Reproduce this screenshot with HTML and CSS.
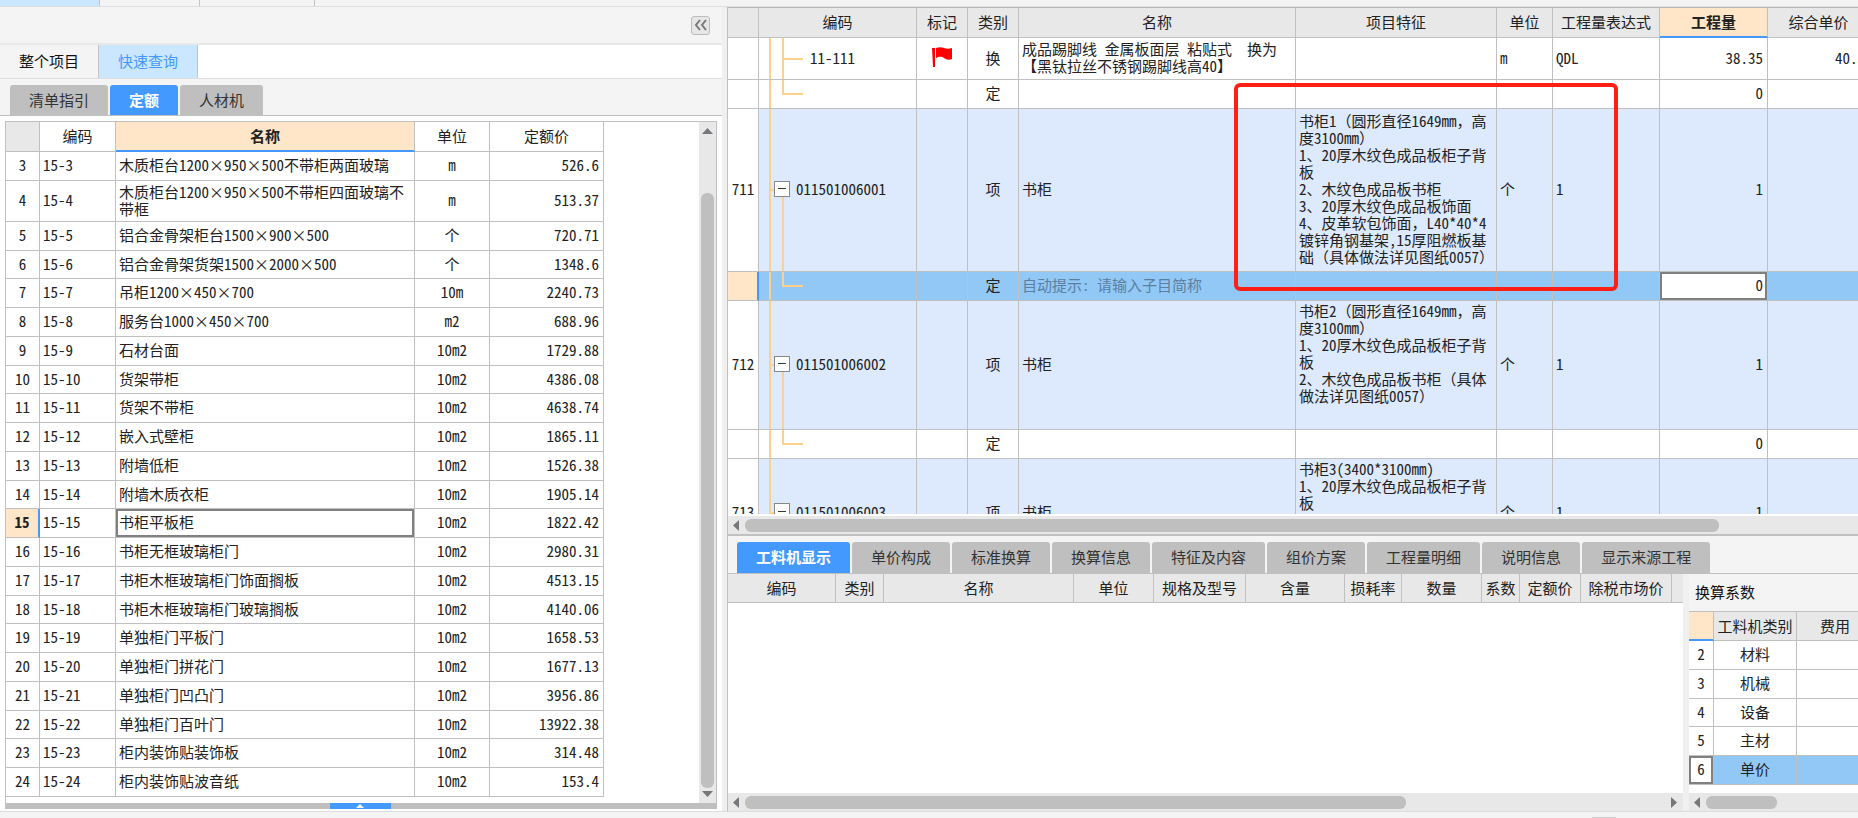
FILE: index.html
```html
<!DOCTYPE html>
<html lang="zh-CN">
<head>
<meta charset="utf-8">
<title>快速查询</title>
<link rel="stylesheet" href="styles.css">
</head>
<body>
<div class="app">
  <div class="strip"><span class="strip-tab on"></span><span class="strip-tab"></span><span class="strip-tab wide"></span></div>
  <main class="main">
    <aside class="left">
      <div class="left-head">
        <button class="collapse" aria-label="收起"><svg width="14" height="12" viewBox="0 0 14 12" fill="none" stroke="#777" stroke-width="2"><path d="M6 1 2 6l4 5M12 1 8 6l4 5"/></svg></button>
      </div>
      <div class="modes">
        <button class="mode">整个项目</button><button class="mode on">快速查询</button>
      </div>
      <div class="tabs left-tabs">
        <button class="tab">清单指引</button><button class="tab on">定额</button><button class="tab">人材机</button>
      </div>
      <div class="frame">
        <div class="frame-body">
          <div class="frame-table">
            <table class="grid quota">
              <colgroup><col class="q-no"><col class="q-code"><col class="q-name"><col class="q-unit"><col class="q-price"></colgroup>
              <thead><tr><th class="corner"></th><th>编码</th><th class="active">名称</th><th>单位</th><th>定额价</th></tr></thead>
              <tbody>
              <tr><td class="c">3</td><td>15-3</td><td>木质柜台1200<i>×</i>950<i>×</i>500不带柜两面玻璃</td><td class="c">m</td><td class="r">526.6</td></tr>
              <tr class="double"><td class="c">4</td><td>15-4</td><td>木质柜台1200<i>×</i>950<i>×</i>500不带柜四面玻璃不带框</td><td class="c">m</td><td class="r">513.37</td></tr>
              <tr><td class="c">5</td><td>15-5</td><td>铝合金骨架柜台1500<i>×</i>900<i>×</i>500</td><td class="c">个</td><td class="r">720.71</td></tr>
              <tr><td class="c">6</td><td>15-6</td><td>铝合金骨架货架1500<i>×</i>2000<i>×</i>500</td><td class="c">个</td><td class="r">1348.6</td></tr>
              <tr><td class="c">7</td><td>15-7</td><td>吊柜1200<i>×</i>450<i>×</i>700</td><td class="c">10m</td><td class="r">2240.73</td></tr>
              <tr><td class="c">8</td><td>15-8</td><td>服务台1000<i>×</i>450<i>×</i>700</td><td class="c">m2</td><td class="r">688.96</td></tr>
              <tr><td class="c">9</td><td>15-9</td><td>石材台面</td><td class="c">10m2</td><td class="r">1729.88</td></tr>
              <tr><td class="c">10</td><td>15-10</td><td>货架带柜</td><td class="c">10m2</td><td class="r">4386.08</td></tr>
              <tr><td class="c">11</td><td>15-11</td><td>货架不带柜</td><td class="c">10m2</td><td class="r">4638.74</td></tr>
              <tr><td class="c">12</td><td>15-12</td><td>嵌入式壁柜</td><td class="c">10m2</td><td class="r">1865.11</td></tr>
              <tr><td class="c">13</td><td>15-13</td><td>附墙低柜</td><td class="c">10m2</td><td class="r">1526.38</td></tr>
              <tr><td class="c">14</td><td>15-14</td><td>附墙木质衣柜</td><td class="c">10m2</td><td class="r">1905.14</td></tr>
              <tr><td class="c current">15</td><td>15-15</td><td class="focus">书柜平板柜</td><td class="c">10m2</td><td class="r">1822.42</td></tr>
              <tr><td class="c">16</td><td>15-16</td><td>书柜无框玻璃柜门</td><td class="c">10m2</td><td class="r">2980.31</td></tr>
              <tr><td class="c">17</td><td>15-17</td><td>书柜木框玻璃柜门饰面搁板</td><td class="c">10m2</td><td class="r">4513.15</td></tr>
              <tr><td class="c">18</td><td>15-18</td><td>书柜木框玻璃柜门玻璃搁板</td><td class="c">10m2</td><td class="r">4140.06</td></tr>
              <tr><td class="c">19</td><td>15-19</td><td>单独柜门平板门</td><td class="c">10m2</td><td class="r">1658.53</td></tr>
              <tr><td class="c">20</td><td>15-20</td><td>单独柜门拼花门</td><td class="c">10m2</td><td class="r">1677.13</td></tr>
              <tr><td class="c">21</td><td>15-21</td><td>单独柜门凹凸门</td><td class="c">10m2</td><td class="r">3956.86</td></tr>
              <tr><td class="c">22</td><td>15-22</td><td>单独柜门百叶门</td><td class="c">10m2</td><td class="r">13922.38</td></tr>
              <tr><td class="c">23</td><td>15-23</td><td>柜内装饰贴装饰板</td><td class="c">10m2</td><td class="r">314.48</td></tr>
              <tr><td class="c">24</td><td>15-24</td><td>柜内装饰贴波音纸</td><td class="c">10m2</td><td class="r">153.4</td></tr>
              </tbody>
            </table>
          </div>
          <div class="vscroll">
            <svg width="11" height="6" viewBox="0 0 11 6"><path d="M0 6 5.5 0 11 6z" fill="#77777b"/></svg>
            <div class="vtrack"><div class="vthumb"></div></div>
            <svg width="11" height="6" viewBox="0 0 11 6"><path d="M0 0 5.5 6 11 0z" fill="#77777b"/></svg>
          </div>
        </div>
        <div class="drawer"><button class="drawer-tab" aria-label="展开"><svg width="8" height="4" viewBox="0 0 8 4"><path d="M0 4 4 0l4 4z" fill="#fff"/></svg></button></div>
      </div>
    </aside>
    <div class="resizer"></div>
    <section class="right">
      <div class="bill">
        <div class="bill-view">
          <table class="grid bill-table">
            <colgroup><col class="b-no"><col class="b-code"><col class="b-mark"><col class="b-kind"><col class="b-name"><col class="b-feat"><col class="b-unit"><col class="b-expr"><col class="b-qty"><col class="b-price"></colgroup>
            <thead><tr><th></th><th>编码</th><th>标记</th><th>类别</th><th>名称</th><th>项目特征</th><th>单位</th><th>工程量表达式</th><th class="active">工程量</th><th>综合单价</th></tr></thead>
            <tbody>
            <tr class="two"><td></td><td class="tree mid"><span class="sub">11-111</span></td><td class="c"><svg class="flag" width="20" height="20" viewBox="0 0 20 20"><path d="M0 1h3v19H1z" fill="#f00"/><path d="M4 1c3-1 5-1 8 0s5 1 8 0v11c-3 1-5 1-8-1s-5-1-8 0z" fill="#f00"/></svg></td><td class="c">换</td><td>成品踢脚线 金属板面层 粘贴式&nbsp; 换为<br>【黑钛拉丝不锈钢踢脚线高40】</td><td></td><td>m</td><td>QDL</td><td class="r">38.35</td><td class="r">40.5</td></tr>
            <tr class="one"><td></td><td class="tree end"></td><td></td><td class="c">定</td><td></td><td></td><td></td><td></td><td class="r">0</td><td></td></tr>
            <tr class="item h711"><td class="c no">711</td><td class="tree root"><div class="node"><button class="fold" aria-label="折叠"></button>011501006001</div></td><td></td><td class="c">项</td><td>书柜</td><td class="feature">书柜1<i>（</i>圆形直径1649mm<i>，</i>高<br>度3100mm<i>）</i><br>1、20厚木纹色成品板柜子背<br>板<br>2、木纹色成品板书柜<br>3、20厚木纹色成品板饰面<br>4、皮革软包饰面<i>，</i>L40*40*4<br>镀锌角钢基架,15厚阻燃板基<br>础<i>（</i>具体做法详见图纸0057<i>）</i></td><td>个</td><td>1</td><td class="r">1</td><td></td></tr>
            <tr class="one selected"><td class="current"></td><td class="tree end"></td><td></td><td class="c">定</td><td class="hint">自动提示: 请输入子目简称</td><td></td><td></td><td></td><td class="r focus">0</td><td></td></tr>
            <tr class="item h712"><td class="c no">712</td><td class="tree root"><div class="node"><button class="fold" aria-label="折叠"></button>011501006002</div></td><td></td><td class="c">项</td><td>书柜</td><td class="feature top">书柜2<i>（</i>圆形直径1649mm<i>，</i>高<br>度3100mm<i>）</i><br>1、20厚木纹色成品板柜子背<br>板<br>2、木纹色成品板书柜<i>（</i>具体<br>做法详见图纸0057<i>）</i></td><td>个</td><td>1</td><td class="r">1</td><td></td></tr>
            <tr class="one"><td></td><td class="tree end"></td><td></td><td class="c">定</td><td></td><td></td><td></td><td></td><td class="r">0</td><td></td></tr>
            <tr class="item h713"><td class="c no">713</td><td class="tree last"><div class="node"><button class="fold" aria-label="折叠"></button>011501006003</div></td><td></td><td class="c">项</td><td>书柜</td><td class="feature top">书柜3(3400*3100mm)<br>1、20厚木纹色成品板柜子背<br>板</td><td>个</td><td>1</td><td class="r">1</td><td></td></tr>
            </tbody>
          </table>
          <div class="callout"></div>
        </div>
        <div class="hscroll">
          <svg width="6" height="11" viewBox="0 0 6 11"><path d="M6 0 0 5.500 6 11z" fill="#77777b"/></svg>
          <div class="hthumb wide"></div>
        </div>
      </div>
      <div class="detail">
        <div class="tabs detail-tabs">
          <button class="tab on">工料机显示</button><button class="tab">单价构成</button><button class="tab">标准换算</button><button class="tab">换算信息</button><button class="tab">特征及内容</button><button class="tab">组价方案</button><button class="tab">工程量明细</button><button class="tab">说明信息</button><button class="tab">显示来源工程</button>
        </div>
        <div class="detail-body">
          <div class="res">
            <div class="res-view">
              <table class="grid res-table">
                <colgroup><col class="r-code"><col class="r-kind"><col class="r-name"><col class="r-unit"><col class="r-spec"><col class="r-amt"><col class="r-loss"><col class="r-qty"><col class="r-coef"><col class="r-price"><col class="r-mkt"><col></colgroup>
                <thead><tr><th>编码</th><th>类别</th><th>名称</th><th>单位</th><th>规格及型号</th><th>含量</th><th>损耗率</th><th>数量</th><th>系数</th><th>定额价</th><th>除税市场价</th><th></th></tr></thead>
              </table>
            </div>
            <div class="hscroll">
              <svg width="6" height="11" viewBox="0 0 6 11"><path d="M6 0 0 5.500 6 11z" fill="#77777b"/></svg>
              <div class="hthumb medium"></div>
              <svg class="far" width="6" height="11" viewBox="0 0 6 11"><path d="M0 0l6 5.500L0 11z" fill="#77777b"/></svg>
            </div>
          </div>
          <div class="coef">
            <h2 class="coef-title">换算系数</h2>
            <div class="coef-view">
              <table class="grid coef-table">
                <colgroup><col class="f-no"><col class="f-kind"><col class="f-fee"></colgroup>
                <thead><tr><th class="active"></th><th>工料机类别</th><th>费用</th></tr></thead>
                <tbody>
                <tr><td class="c">2</td><td class="c">材料</td><td></td></tr>
                <tr><td class="c">3</td><td class="c">机械</td><td></td></tr>
                <tr><td class="c">4</td><td class="c">设备</td><td></td></tr>
                <tr><td class="c">5</td><td class="c">主材</td><td></td></tr>
                <tr class="selected"><td class="c focus">6</td><td class="c">单价</td><td></td></tr>
                </tbody>
              </table>
            </div>
            <div class="hscroll">
              <svg width="6" height="11" viewBox="0 0 6 11"><path d="M6 0 0 5.500 6 11z" fill="#77777b"/></svg>
              <div class="hthumb short"></div>
            </div>
          </div>
        </div>
      </div>
    </section>
  </main>
  <footer class="status"><span class="grip"></span></footer>
</div>
</body>
</html>
```
FILE: styles.css
```css
* { box-sizing: border-box; }

body {
  margin: 0;
  font: 15px/17px "Noto Sans CJK SC", "Liberation Sans", sans-serif;
  font-feature-settings: "hwid";
  color: #222;
  background: #f4f4f4;
}

button {
  margin: 0;
  border: 0;
  padding: 0;
  font: inherit;
  font-feature-settings: inherit;
  color: inherit;
  background: none;
}

svg { display: block; flex: none; }

.app { display: flex; flex-direction: column; height: 100vh; overflow: hidden; }

.strip { display: flex; flex: none; height: 7px; border-bottom: 1px solid #dedede; }
.strip-tab { width: 100px; border-right: 1px solid #c4c4c4; }
.strip-tab.wide { width: 115px; }
.strip-tab.on { background: #cbe7ff; }

.main { display: flex; flex: 1; min-height: 0; }

.status { display: flex; flex: none; height: 7px; border-top: 1px solid #dcdcdc; align-items: flex-end; justify-content: flex-end; padding-right: 242px; }
.grip { width: 24px; height: 1px; background: #c8c8c8; }

/* Left panel */
.left { display: flex; flex-direction: column; flex: none; width: 722px; background: #fff; }
.left-head { display: flex; justify-content: flex-end; align-items: center; height: 38px; padding-right: 12px; border-bottom: 2px solid #e8e8e8; background: #f4f4f4; }
.collapse { display: grid; place-items: center; width: 19px; height: 19px; border: 1px solid #bdbdbd; border-radius: 3px; background: #e6e6e6; }

.modes { display: flex; height: 34px; border-bottom: 1px solid #e0e0e0; }
.mode { padding: 0 19px 2px; border-right: 1px solid #c4c4c4; color: #111; background: #f4f4f4; }
.mode.on { color: #4499ff; background: #cbe7ff; }

.tabs { display: flex; align-items: flex-end; gap: 2px; border-bottom: 1px solid #c0c0c0; background: #f4f4f4; }
.tab { height: 30px; padding: 0 19px 2px; border-radius: 3px 3px 0 0; color: #333; background: #bfbfbf; white-space: nowrap; }
.tab.on { color: #fff; font-weight: 700; background: #4499ff; }
.left-tabs { height: 37px; padding-left: 10px; }

.frame { display: flex; flex-direction: column; flex: 1; min-height: 0; margin: 5px 5px 2px; border: 1px solid #c0c0c0; border-bottom: 0; }
.frame-body { display: flex; flex: 1; min-height: 0; }
.frame-table { flex: 1; overflow: hidden; }

.drawer { display: flex; flex: none; height: 6px; justify-content: center; padding-right: 2px; background: #bfbfbf; }
.drawer-tab { display: grid; place-items: center; width: 61px; height: 6px; background: #4499ff; }

.vscroll { display: flex; flex-direction: column; align-items: center; flex: none; width: 17px; padding: 6px 0; background: #e8e8e8; }
.vtrack { flex: 1; width: 13px; padding: 59px 0 3px; }
.vthumb { height: 100%; border-radius: 6px; background: #bfbfbf; }

.resizer { flex: none; width: 5px; background: #f0f0f0; }

/* Tables */
.grid { table-layout: fixed; border-collapse: separate; border-spacing: 0; }
.grid th, .grid td { padding: 0 4px 3px 3px; border-right: 1px solid #c0c0c0; border-bottom: 1px solid #c0c0c0; text-align: left; font-weight: 400; vertical-align: middle; }
.grid th { padding: 0 0 2px; text-align: center; white-space: nowrap; background: #e8e8e8; }
.grid .c { padding: 0 0 3px; text-align: center; }
.grid .r { text-align: right; }
.grid th.active { border-bottom: 2px solid #4499ff; font-weight: 700; background: #ffe6c8; }
.grid .current { border-right: 2px solid #4499ff; font-weight: 700; background: #ffe6c8; }
.grid .focus { background: #fff; box-shadow: inset 0 0 0 2px #808080; }
.grid .selected { background: #92c8f6; }
/* Full-width symbols among half-width digits */
.grid i { display: inline-block; width: 15px; font-style: normal; font-feature-settings: normal; text-align: center; }

.quota { width: 598px; }
.quota thead tr { height: 30px; }
.quota thead th { background: #fff; }
.quota thead .corner { background: #e8e8e8; }
.quota thead .active { background: #ffe6c8; }
.quota tbody tr { height: 29px; }
.quota tbody tr:nth-child(4n) { height: 28px; }
.quota tbody .double { height: 41px; }
.q-no { width: 34px; }
.q-code { width: 76px; }
.q-name { width: 299px; }
.q-unit { width: 75px; }
.q-price { width: 114px; }

/* Bill of quantities */
.right { display: flex; flex-direction: column; flex: 1; min-width: 0; border-left: 1px solid #c0c0c0; }
.bill { display: flex; flex-direction: column; flex: 1; min-height: 0; border-top: 1px solid #b8b8b8; border-bottom: 2px solid #c0c0c0; background: #fff; }
.bill-view { position: relative; flex: 1; min-height: 0; margin-bottom: 2px; overflow: hidden; }
.bill-table { width: 1142px; }
.bill-table thead tr { height: 30px; }
.bill-table .two { height: 42px; }
.bill-table .one { height: 29px; }
.bill-table .h711 { height: 163px; }
.bill-table .h712 { height: 129px; }
.bill-table .h713 { height: 108px; }
.bill-table .item { background: #dde9fd; }
.bill-table .no { background: #fff; }
.bill-table .feature { padding-right: 0; white-space: nowrap; }
.bill-table .top { padding-top: 1px; vertical-align: top; }
.bill-table .hint { color: #5c7f9e; }
.b-no { width: 31px; }
.b-code { width: 158px; }
.b-mark { width: 51px; }
.b-kind { width: 51px; }
.b-name { width: 277px; }
.b-feat { width: 201px; }
.b-unit { width: 56px; }
.b-expr { width: 107px; }
.b-qty { width: 108px; }
.b-price { width: 102px; }

.flag { margin: 0 auto; }
.bill-table .tree { --line: linear-gradient(#ffd08c, #ffd08c); padding-left: 15px; background-repeat: no-repeat; }
.tree.mid { background-image: var(--line), var(--line), var(--line); background-position: 10px 0, 23px 0, 23px 50%; background-size: 2px 100%, 2px 100%, 21px 2px; }
.tree.end { background-image: var(--line), var(--line), var(--line); background-position: 10px 0, 23px 0, 23px 50%; background-size: 2px 100%, 2px 50%, 21px 2px; }
.tree.root { background-image: var(--line), var(--line), var(--line); background-position: 10px 0, 23px 100%, 10px 50%; background-size: 2px 100%, 2px 50%, 6px 2px; }
.tree.last { background-image: var(--line), var(--line), var(--line); background-position: 10px 0, 23px 100%, 10px 50%; background-size: 2px 50%, 2px 50%, 6px 2px; }
.sub { padding-left: 36px; }
.node { display: flex; align-items: center; gap: 6px; }
.fold { display: grid; place-items: center; flex: none; width: 16px; height: 16px; border: 1px solid #888; background: #fff; }
.fold::before { content: ""; width: 8px; height: 1px; background: #333; }

.callout { position: absolute; top: 75px; left: 506px; width: 384px; height: 208px; border: 4px solid #ff2015; border-radius: 6px; }

.hscroll { display: flex; align-items: center; gap: 6px; flex: none; height: 18px; padding: 0 6px 0 5px; background: #e8e8e8; }
.hthumb { height: 13px; border-radius: 6px; background: #bfbfbf; }
.hthumb.wide { width: 87%; }
.hthumb.medium { width: 70%; }
.hthumb.short { width: 71px; }
.far { margin-left: auto; }

/* Detail pane */
.detail { display: flex; flex-direction: column; flex: none; height: 275px; }
.detail-tabs { flex: none; height: 38px; padding-left: 9px; }
.detail-tabs .tab { height: 31px; }
.detail-body { display: flex; flex: 1; min-height: 0; }
.res { display: flex; flex-direction: column; flex: 1; min-width: 0; background: #fff; }
.res-view { flex: 1; overflow: hidden; }
.res-table { width: 100%; }
.res-table tr { height: 29px; }
.res-table th:last-child { border-right: 0; }
.r-code { width: 108px; }
.r-kind { width: 48px; }
.r-name { width: 190px; }
.r-unit { width: 80px; }
.r-spec { width: 92px; }
.r-amt { width: 99px; }
.r-loss { width: 57px; }
.r-qty { width: 80px; }
.r-coef { width: 38px; }
.r-price { width: 61px; }
.r-mkt { width: 91px; }

.coef { display: flex; flex-direction: column; flex: none; width: 175px; border-left: 6px solid #f0f0f0; background: #fff; }
.coef-title { flex: none; height: 38px; margin: 0; padding: 0 6px; border-bottom: 1px solid #c0c0c0; font-size: 15px; line-height: 36px; font-weight: 400; color: #111; background: #f4f4f4; }
.coef-view { flex: 1; overflow: hidden; }
.coef-table { width: 185px; }
.coef-table tr { height: 29px; }
.coef-table tbody tr:nth-child(3) { height: 28px; }
.f-no { width: 25px; }
.f-kind { width: 83px; }
.f-fee { width: 77px; }
```
